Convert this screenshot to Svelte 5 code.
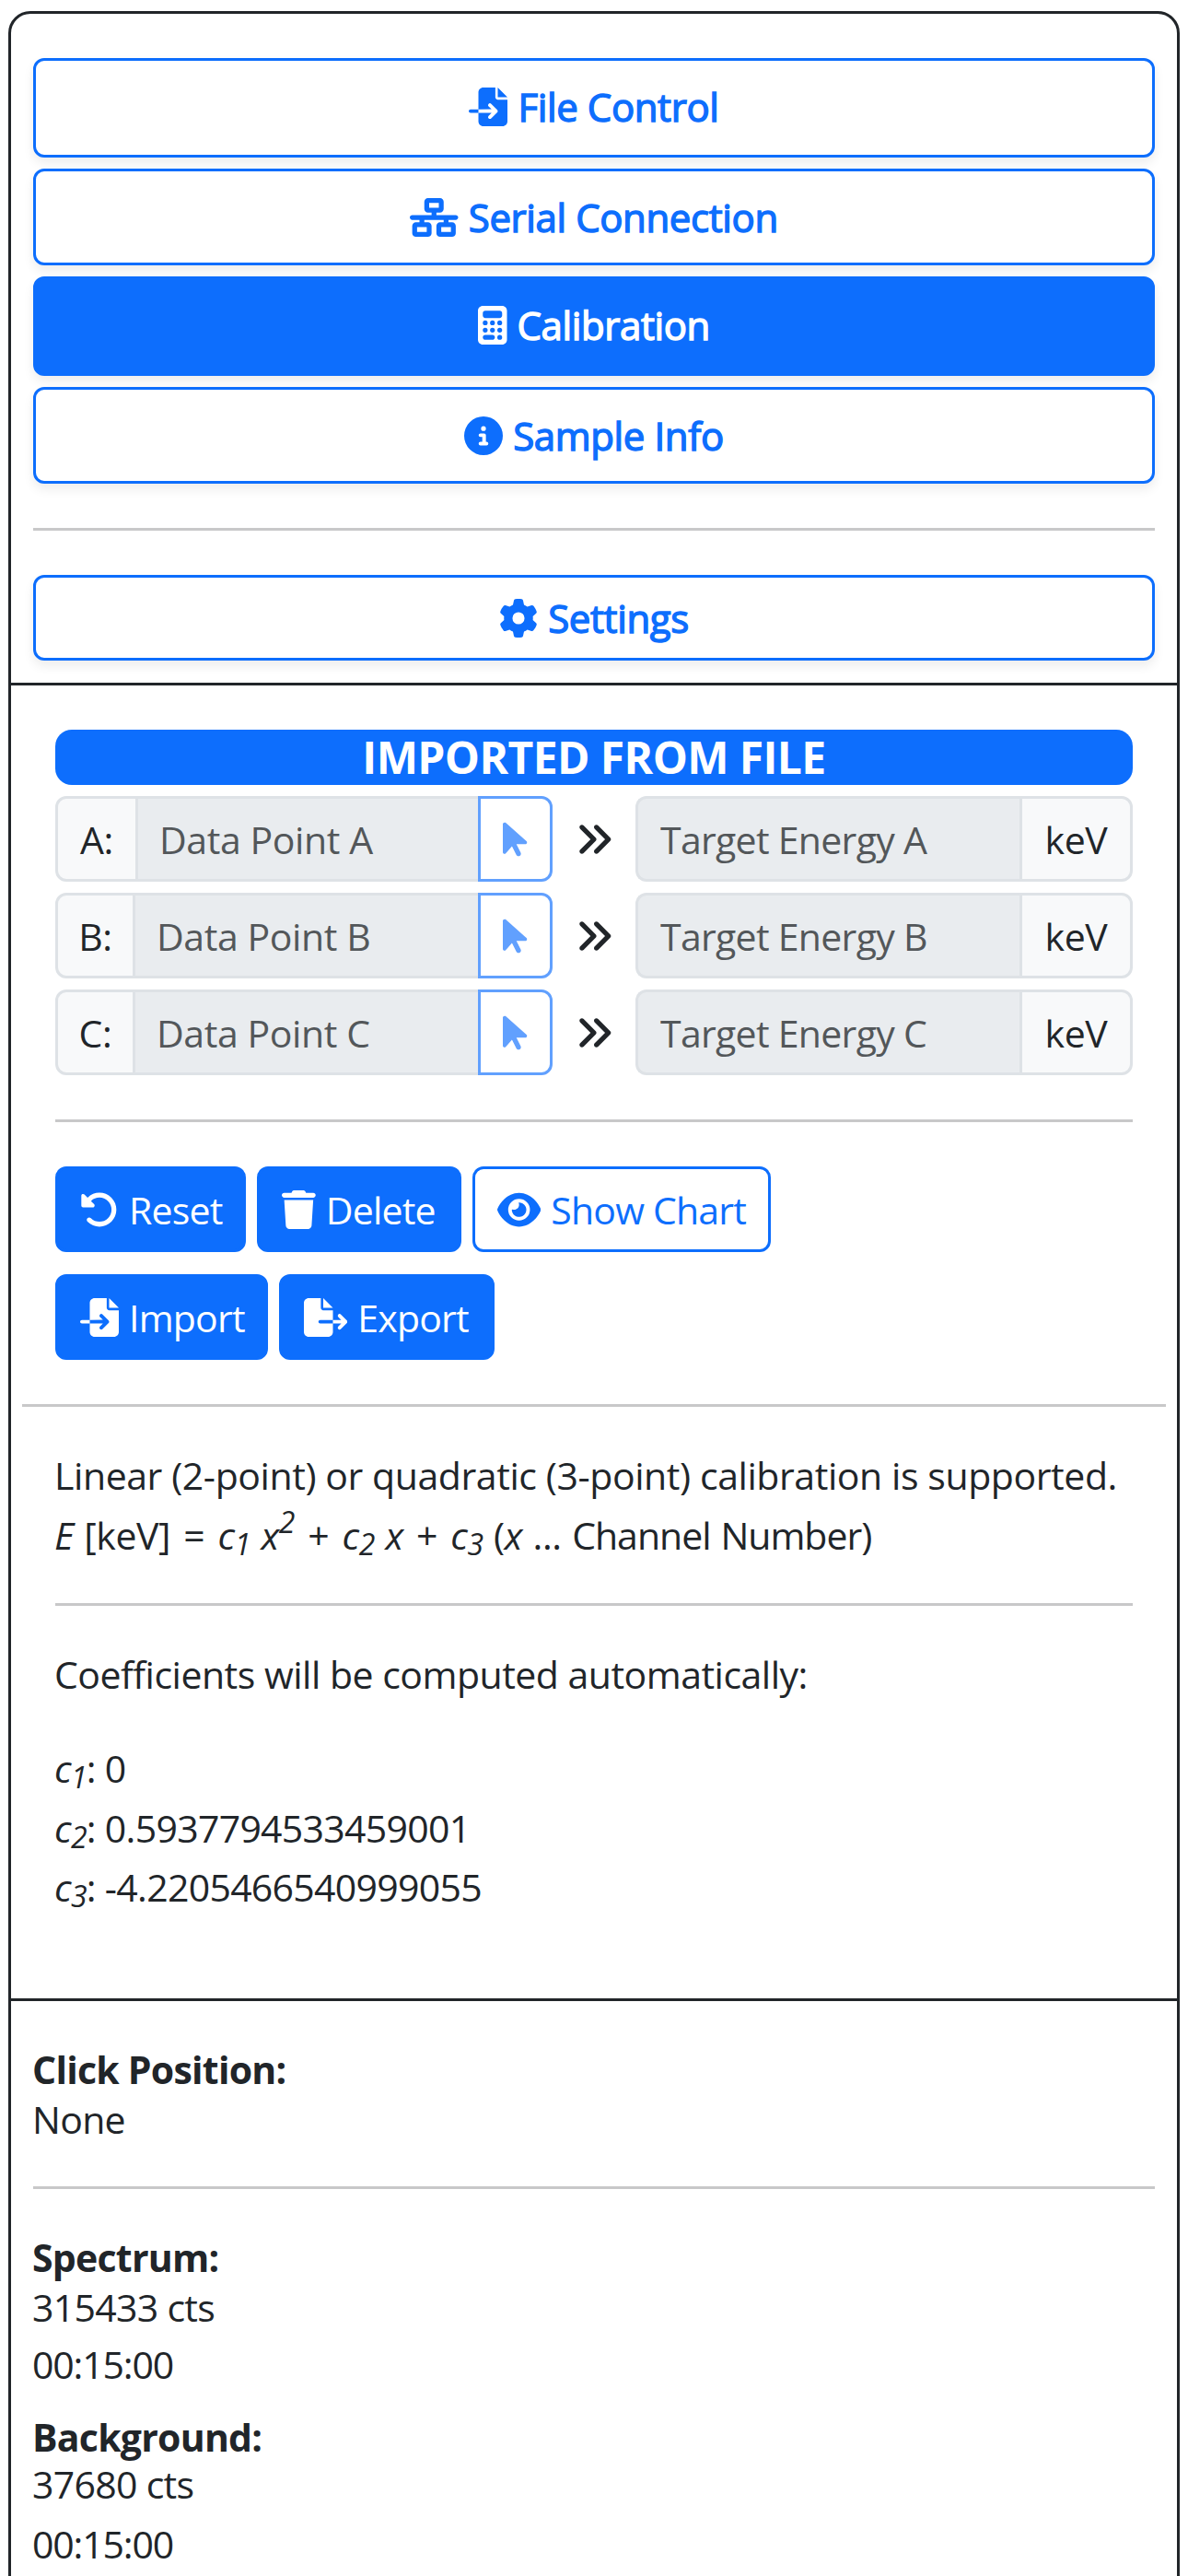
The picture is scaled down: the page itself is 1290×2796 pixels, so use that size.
<script>
  const icons = {
    import: {
      w: 512,
      d: 'M128 64c0-35.3 28.7-64 64-64L352 0l0 128c0 17.7 14.3 32 32 32l128 0 0 288c0 35.3-28.7 64-64 64l-256 0c-35.3 0-64-28.7-64-64l0-112 174.1 0-39 39c-9.4 9.4-9.4 24.6 0 33.9s24.6 9.4 33.9 0l80-80c9.4-9.4 9.4-24.6 0-33.9l-80-80c-9.4-9.4-24.6-9.4-33.9 0s-9.4 24.6 0 33.9l39 39L128 288l0-224zm0 224l0 48L24 336c-13.3 0-24-10.7-24-24s10.7-24 24-24l104 0zM512 128l-128 0L384 0 512 128z'
    },
    export: {
      w: 576,
      d: 'M0 64C0 28.7 28.7 0 64 0L224 0l0 128c0 17.7 14.3 32 32 32l128 0 0 128-168 0c-13.3 0-24 10.7-24 24s10.7 24 24 24l168 0 0 112c0 35.3-28.7 64-64 64L64 512c-35.3 0-64-28.7-64-64L0 64zM384 336l0-48 110.1 0-39-39c-9.4-9.4-9.4-24.6 0-33.9s24.6-9.4 33.9 0l80 80c9.4 9.4 9.4 24.6 0 33.9l-80 80c-9.4 9.4-24.6 9.4-33.9 0s-9.4-24.6 0-33.9l39-39L384 336zm0-208l-128 0L256 0 384 128z'
    },
    network: {
      w: 640,
      d: 'M256 64l128 0 0 64-128 0 0-64zM240 0c-26.5 0-48 21.5-48 48l0 96c0 26.5 21.5 48 48 48l48 0 0 32L32 224c-17.7 0-32 14.3-32 32s14.3 32 32 32l96 0 0 32-48 0c-26.5 0-48 21.5-48 48l0 96c0 26.5 21.5 48 48 48l160 0c26.5 0 48-21.5 48-48l0-96c0-26.5-21.5-48-48-48l-48 0 0-32 256 0 0 32-48 0c-26.5 0-48 21.5-48 48l0 96c0 26.5 21.5 48 48 48l160 0c26.5 0 48-21.5 48-48l0-96c0-26.5-21.5-48-48-48l-48 0 0-32 96 0c17.7 0 32-14.3 32-32s-14.3-32-32-32l-256 0 0-32 48 0c26.5 0 48-21.5 48-48l0-96c0-26.5-21.5-48-48-48L240 0zM96 448l0-64 128 0 0 64L96 448zm320-64l128 0 0 64-128 0 0-64z'
    },
    calculator: {
      w: 384,
      d: 'M64 0C28.7 0 0 28.7 0 64L0 448c0 35.3 28.7 64 64 64l256 0c35.3 0 64-28.7 64-64l0-384c0-35.3-28.7-64-64-64L64 0zM96 64l192 0c17.7 0 32 14.3 32 32l0 32c0 17.7-14.3 32-32 32L96 160c-17.7 0-32-14.3-32-32l0-32c0-17.7 14.3-32 32-32zm32 160a32 32 0 1 1 -64 0 32 32 0 1 1 64 0zM96 352a32 32 0 1 1 0-64 32 32 0 1 1 0 64zM64 416c0-17.7 14.3-32 32-32l96 0c17.7 0 32 14.3 32 32s-14.3 32-32 32l-96 0c-17.7 0-32-14.3-32-32zM192 256a32 32 0 1 1 0-64 32 32 0 1 1 0 64zm32 64a32 32 0 1 1 -64 0 32 32 0 1 1 64 0zm64-64a32 32 0 1 1 0-64 32 32 0 1 1 0 64zm32 64a32 32 0 1 1 -64 0 32 32 0 1 1 64 0zM288 448a32 32 0 1 1 0-64 32 32 0 1 1 0 64z'
    },
    info: {
      w: 512,
      d: 'M256 512A256 256 0 1 0 256 0a256 256 0 1 0 0 512zM216 336l24 0 0-64-24 0c-13.3 0-24-10.7-24-24s10.7-24 24-24l48 0c13.3 0 24 10.7 24 24l0 88 8 0c13.3 0 24 10.7 24 24s-10.7 24-24 24l-80 0c-13.3 0-24-10.7-24-24s10.7-24 24-24zm40-208a32 32 0 1 1 0 64 32 32 0 1 1 0-64z'
    },
    gear: {
      w: 512,
      d: 'M495.9 166.6c3.2 8.7 .5 18.4-6.4 24.6l-43.3 39.4c1.1 8.3 1.7 16.8 1.7 25.4s-.6 17.1-1.7 25.4l43.3 39.4c6.9 6.2 9.6 15.9 6.4 24.6c-4.4 11.9-9.7 23.3-15.8 34.3l-4.7 8.1c-6.6 11-14 21.4-22.1 31.2c-5.9 7.2-15.7 9.6-24.5 6.8l-55.7-17.7c-13.4 10.3-28.2 18.9-44 25.4l-12.5 57.1c-2 9.1-9 16.3-18.2 17.8c-13.8 2.3-28 3.5-42.5 3.5s-28.7-1.2-42.5-3.5c-9.2-1.5-16.2-8.7-18.2-17.8l-12.5-57.1c-15.8-6.5-30.6-15.1-44-25.4L83.1 425.9c-8.8 2.8-18.6 .3-24.5-6.8c-8.1-9.8-15.5-20.2-22.1-31.2l-4.7-8.1c-6.1-11-11.4-22.4-15.8-34.3c-3.2-8.7-.5-18.4 6.4-24.6l43.3-39.4C64.6 273.1 64 264.6 64 256s.6-17.1 1.7-25.4L22.4 191.2c-6.9-6.2-9.6-15.9-6.4-24.6c4.4-11.9 9.7-23.3 15.8-34.3l4.7-8.1c6.6-11 14-21.4 22.1-31.2c5.9-7.2 15.7-9.6 24.5-6.8l55.7 17.7c13.4-10.3 28.2-18.9 44-25.4l12.5-57.1c2-9.1 9-16.3 18.2-17.8C227.3 1.2 241.5 0 256 0s28.7 1.2 42.5 3.5c9.2 1.5 16.2 8.7 18.2 17.8l12.5 57.1c15.8 6.5 30.6 15.1 44 25.4l55.7-17.7c8.8-2.8 18.6-.3 24.5 6.8c8.1 9.8 15.5 20.2 22.1 31.2l4.7 8.1c6.1 11 11.4 22.4 15.8 34.3zM256 336a80 80 0 1 0 0-160 80 80 0 1 0 0 160z'
    },
    pointer: {
      w: 320,
      d: 'M0 55.2L0 426c0 12.2 9.9 22 22 22c6.3 0 12.4-2.7 16.6-7.5L121.2 346l58.1 116.3c7.9 15.8 27.1 22.2 42.9 14.3s22.2-27.1 14.3-42.9L179.8 320l118.1 0c12.2 0 22.1-9.9 22.1-22.1c0-6.3-2.7-12.3-7.4-16.5L38.6 37.9C34.3 34.1 28.9 32 23.2 32C10.4 32 0 42.4 0 55.2z'
    },
    angles: {
      w: 512,
      d: 'M470.6 278.6c12.5-12.5 12.5-32.8 0-45.3l-160-160c-12.5-12.5-32.8-12.5-45.3 0s-12.5 32.8 0 45.3L402.7 256 265.4 393.4c-12.5 12.5-12.5 32.8 0 45.3s32.8 12.5 45.3 0l160-160zm-352 160l160-160c12.5-12.5 12.5-32.8 0-45.3l-160-160c-12.5-12.5-32.8-12.5-45.3 0s-12.5 32.8 0 45.3L210.7 256 73.4 393.4c-12.5 12.5-12.5 32.8 0 45.3s32.8 12.5 45.3 0z'
    },
    rotate: {
      w: 512,
      d: 'M48.5 224L40 224c-13.3 0-24-10.7-24-24L16 72c0-9.7 5.8-18.5 14.8-22.2s19.3-1.7 26.2 5.2L98.6 96.6c87.6-86.5 228.7-86.2 315.8 1c87.5 87.5 87.5 229.3 0 316.8s-229.3 87.5-316.8 0c-12.5-12.5-12.5-32.8 0-45.3s32.8-12.5 45.3 0c62.5 62.5 163.8 62.5 226.3 0s62.5-163.8 0-226.3c-62.2-62.2-162.7-62.5-225.3-1L185 183c6.9 6.9 8.9 17.2 5.2 26.2s-12.5 14.8-22.2 14.8L48.5 224z'
    },
    trash: {
      w: 448,
      d: 'M135.2 17.7L128 32 32 32C14.3 32 0 46.3 0 64S14.3 96 32 96l384 0c17.7 0 32-14.3 32-32s-14.3-32-32-32l-96 0-7.2-14.3C307.4 6.8 296.3 0 284.2 0L163.8 0c-12.1 0-23.2 6.8-28.6 17.7zM416 128L32 128 53.2 467c1.6 25.3 22.6 45 47.9 45l245.8 0c25.3 0 46.3-19.7 47.9-45L416 128z'
    },
    eye: {
      w: 576,
      d: 'M288 32c-80.8 0-145.5 36.8-192.6 80.6C48.6 156 17.3 208 2.5 243.7c-3.3 7.9-3.3 16.7 0 24.6C17.3 304 48.6 356 95.4 399.4C142.5 443.2 207.2 480 288 480s145.5-36.8 192.6-80.6c46.8-43.5 78.1-95.4 93-131.1c3.3-7.9 3.3-16.7 0-24.6c-14.9-35.7-46.2-87.7-93-131.1C433.5 68.8 368.8 32 288 32zM144 256a144 144 0 1 1 288 0 144 144 0 1 1 -288 0zm144-64c0 35.3-28.7 64-64 64c-7.1 0-13.9-1.2-20.3-3.3c-5.5-1.8-11.9 1.6-11.7 7.4c.3 6.9 1.3 13.8 3.2 20.7c13.7 51.2 66.4 81.6 117.6 67.9s81.6-66.4 67.9-117.6c-11.1-41.5-47.8-69.4-88.6-71.1c-5.8-.2-9.2 6.1-7.4 11.7c2.1 6.4 3.3 13.2 3.3 20.3z'
    }
  };

  const tabs = [
    { label: 'File Control', icon: 'import' },
    { label: 'Serial Connection', icon: 'network', slim: true },
    { label: 'Calibration', icon: 'calculator', active: true },
    { label: 'Sample Info', icon: 'info', slim: true }
  ];
  const points = ['A', 'B', 'C'];
  const actions = [
    { label: 'Reset', icon: 'rotate', width: 207 },
    { label: 'Delete', icon: 'trash', width: 222 },
    { label: 'Show Chart', icon: 'eye', width: 324, outline: true }
  ];
  const transfers = [
    { label: 'Import', icon: 'import', width: 231 },
    { label: 'Export', icon: 'export', width: 234 }
  ];
  const coefficients = ['0', '0.5937794533459001', '-4.2205466540999055'];
</script>

{#snippet icon(name)}
  <svg class="icon" viewBox="0 0 {icons[name].w} 512" width={(icons[name].w * 42) / 512} height="42" aria-hidden="true">
    <path fill-rule="evenodd" d={icons[name].d} />
  </svg>
{/snippet}

{#snippet action(b)}
  <button class="btn" class:outline={b.outline} style="width: {b.width}px">
    {@render icon(b.icon)}<span>{b.label}</span>
  </button>
{/snippet}

<div class="screen">
  <main class="panel">
    <nav class="tabs">
      {#each tabs as t}
        <button class="tab" class:slim={t.slim} class:active={t.active}>
          {@render icon(t.icon)}<span>{t.label}</span>
        </button>
      {/each}
      <hr class="tabs-rule" />
      <button class="tab settings">{@render icon('gear')}<span>Settings</span></button>
    </nav>

    <section class="calibration">
      <div class="badge">IMPORTED FROM FILE</div>
      <div class="points">
        {#each points as p}
          <div class="point">
            <div class="group">
              <span class="addon name" class:wide={p === 'A'}>{p}:</span>
              <span class="field data">Data Point {p}</span>
              <button class="pick" aria-label="Pick point {p}" disabled>{@render icon('pointer')}</button>
            </div>
            <div class="arrow">{@render icon('angles')}</div>
            <div class="group">
              <span class="field energy">Target Energy {p}</span>
              <span class="addon unit">keV</span>
            </div>
          </div>
        {/each}
      </div>
      <hr />
      <div class="actions">
        {#each actions as b}{@render action(b)}{/each}
      </div>
      <div class="actions second">
        {#each transfers as b}{@render action(b)}{/each}
      </div>
      <hr class="bleed" />
      <p class="note">Linear (2-point) or quadratic (3-point) calibration is supported.</p>
      <p class="formula">
        <i>E</i> [keV] <span class="op">=</span> <i>c<sub>1</sub> x<sup>2</sup></i> <span class="op">+</span>
        <i>c<sub>2</sub> x</i> <span class="op">+</span> <i>c<sub>3</sub></i> (<i>x</i> ... <span class="legend">Channel Number)</span>
      </p>
      <hr class="formula-rule" />
      <p class="note auto">Coefficients will be computed automatically:</p>
      <div class="coefficients">
        {#each coefficients as c, i}
          <p><i>c<sub>{i + 1}</sub></i>: {c}</p>
        {/each}
      </div>
    </section>

    <section class="stats">
      <h2>Click Position:</h2>
      <p>None</p>
      <hr />
      <h2>Spectrum:</h2>
      <p>315433 cts</p>
      <p class="time">00:15:00</p>
      <h2 class="background">Background:</h2>
      <p>37680 cts</p>
      <p class="time late">00:15:00</p>
    </section>
  </main>
</div>

<style>
  :global(body) {
    background: #fff;
  }
  .screen {
    box-sizing: border-box;
    width: 1290px;
    height: 2796px;
    padding: 12px 9px 0;
    overflow: hidden;
    font: 41px/63px "Open Sans", "Noto Sans", sans-serif;
    letter-spacing: -0.4px;
    color: #212529;
  }
  .screen :global(*) {
    box-sizing: border-box;
  }
  .panel {
    height: 2850px;
    border: 3px solid #212529;
    border-radius: 24px;
  }
  p, h2 {
    margin: 0 0 0 -1px;
    white-space: nowrap;
  }
  hr {
    height: 3px;
    margin: 48px 0;
    border: 0;
    background: #c8c8c9;
  }
  button {
    font: inherit;
    letter-spacing: inherit;
    margin: 0;
  }
  .icon {
    display: block;
    flex: none;
    fill: currentColor;
  }

  .tabs {
    display: flex;
    flex-direction: column;
    gap: 12px;
    padding: 48px 24px 24px;
    border-bottom: 3px solid #212529;
  }
  .tab {
    display: flex;
    align-items: center;
    justify-content: center;
    gap: 11px;
    height: 108px;
    padding: 0 0 3px;
    border: 3px solid #0d6efd;
    border-radius: 12px;
    background: #fff;
    color: #0d6efd;
    box-shadow: 0 6px 12px rgba(0, 0, 0, 0.075);
    font-size: 42px;
    letter-spacing: -0.4px;
    -webkit-text-stroke: 1.4px currentColor;
  }
  .tab .icon {
    -webkit-text-stroke: 0;
  }
  .tab.slim {
    height: 105px;
    padding-bottom: 0;
  }
  .tab.settings {
    height: 93px;
    padding-bottom: 0;
  }
  .tab.active {
    background: #0d6efd;
    color: #fff;
  }
  .tabs-rule {
    width: 100%;
    margin: 36px 0;
  }

  .calibration {
    height: 1428px;
    padding: 48px;
    border-bottom: 3px solid #212529;
  }
  .badge {
    height: 60px;
    border-radius: 18px;
    background: #0d6efd;
    color: #fff;
    font-size: 48px;
    font-weight: 700;
    line-height: 60px;
    letter-spacing: -0.6px;
    text-align: center;
  }
  .points {
    display: grid;
    gap: 12px;
    margin-top: 12px;
  }
  .point {
    display: grid;
    grid-template-columns: 540px 90px 540px;
    height: 93px;
  }
  .group {
    display: flex;
  }
  .addon,
  .field {
    padding-top: 2px;
    border: 3px solid #dee2e6;
    line-height: 85px;
    white-space: nowrap;
  }
  .addon {
    flex: none;
    background: #f8f9fa;
    text-align: center;
  }
  .name {
    width: 87px;
    border-radius: 12px 0 0 12px;
  }
  .name.wide {
    width: 90px;
  }
  .unit {
    width: 123px;
    border-radius: 0 12px 12px 0;
  }
  .field {
    flex: 1;
    background: #e9ecef;
    color: #53575a;
    border-right-width: 0;
  }
  .data {
    border-left-width: 0;
    padding-left: 23px;
  }
  .energy {
    border-radius: 12px 0 0 12px;
    padding-left: 24px;
    letter-spacing: -0.7px;
  }
  .pick {
    display: flex;
    align-items: center;
    justify-content: center;
    width: 81px;
    padding: 0;
    border: 3px solid #61a0fe;
    border-radius: 0 12px 12px 0;
    background: #fff;
    color: #61a0fe;
  }
  .arrow {
    display: flex;
    align-items: center;
    justify-content: center;
  }

  .actions {
    display: flex;
    gap: 12px;
  }
  .actions.second {
    margin-top: 24px;
  }
  .btn {
    display: flex;
    align-items: center;
    gap: 11px;
    height: 93px;
    padding: 1px 0 0 24px;
    border: 3px solid #0d6efd;
    border-radius: 12px;
    background: #0d6efd;
    color: #fff;
    letter-spacing: -0.8px;
    white-space: nowrap;
  }
  .btn.outline {
    background: #fff;
    color: #0d6efd;
  }
  .bleed {
    margin: 48px -36px 43px;
  }
  .note {
    letter-spacing: -0.42px;
  }
  .note.auto {
    letter-spacing: -0.5px;
  }
  .formula {
    margin-top: 2px;
    word-spacing: 1.2px;
  }
  .op {
    padding: 0 2.8px;
  }
  .legend {
    letter-spacing: -1px;
  }
  .formula-rule {
    margin: 42px 0 43px;
  }
  sub,
  sup {
    font-size: 32px;
    line-height: 0;
  }
  sub {
    vertical-align: -6px;
  }
  sup {
    vertical-align: 18px;
  }
  .coefficients {
    margin-top: 38px;
    letter-spacing: -0.7px;
    line-height: 64.5px;
  }

  .stats {
    padding: 49px 24px 0;
    line-height: 50px;
  }
  .stats h2 {
    font-size: 41px;
    font-weight: 700;
    letter-spacing: -0.75px;
    margin-bottom: 4px;
  }
  .stats p {
    letter-spacing: -0.7px;
  }
  .stats hr {
    margin: 48px 0 49px;
  }
  .stats p.time {
    margin-top: 12px;
    letter-spacing: -1.15px;
  }
  .stats .background {
    margin: 29px 0 1px -1px;
  }
  .stats p.late {
    margin-top: 15px;
  }
</style>
